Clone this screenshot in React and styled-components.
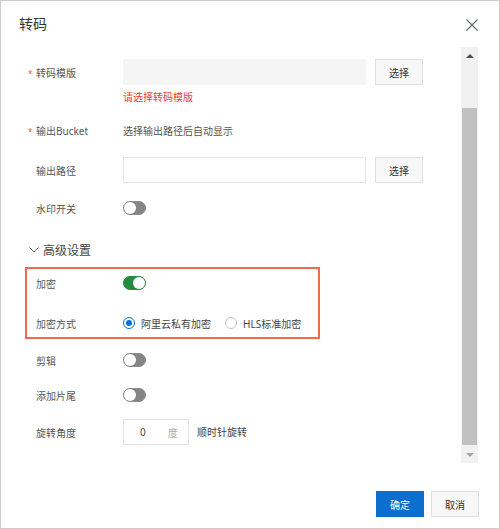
import React, { useState } from "react";
import styled, { createGlobalStyle } from "styled-components";

const GlobalStyle = createGlobalStyle`
  html, body {
    margin: 0;
    padding: 0;
    background: #fff;
  }
  body {
    font-family: "Noto Sans", "Noto Sans CJK SC", sans-serif;
    color: #444;
  }
  * {
    box-sizing: border-box;
  }
`;

const Frame = styled.div`
  width: 500px;
  height: 529px;
  border: 1px solid #cdcdcd;
  background: #fff;
  display: flex;
  flex-direction: column;
`;

const Header = styled.div`
  height: 46px;
  display: flex;
  align-items: center;
  justify-content: space-between;
  padding: 0 20px 0 18px;
`;

const Title = styled.div`
  font-size: 14px;
  color: #333;
  font-family: "Noto Sans CJK SC", sans-serif;
  margin-top: -2px;
`;

const CloseButton = styled.button`
  width: 14px;
  height: 14px;
  padding: 0;
  border: 0;
  background: none;
  display: flex;
  align-items: center;
  justify-content: center;
  cursor: pointer;
  margin-top: 2px;
`;

const Main = styled.div`
  height: 416px;
  display: flex;
  padding-right: 21px;
`;

const Content = styled.div`
  flex: 1;
  padding: 12px 0 0 24px;
  display: flex;
  flex-direction: column;
`;

const Row = styled.div`
  display: flex;
  align-items: center;
  height: 26px;
  padding-left: 3px;
  margin-top: ${(p) => p.$gap || 0}px;
`;

const Star = styled.span`
  width: 8px;
  flex-shrink: 0;
  color: #e8553f;
  font-size: 8px;
  line-height: 1;
  padding-top: 4px;
`;

const Label = styled.div`
  width: 87px;
  flex-shrink: 0;
  font-size: 10px;
  color: #555;
`;

const Value = styled.div`
  font-size: 10px;
  color: #555;
`;

const Input = styled.div`
  width: 243px;
  height: 26px;
  background: ${(p) => (p.$disabled ? "#f5f5f5" : "#fff")};
  border: 1px solid ${(p) => (p.$disabled ? "#f5f5f5" : "#e4e4e4")};
`;

const Button = styled.button`
  width: 48px;
  height: 26px;
  margin-left: ${(p) => p.$offset || 0}px;
  border: 1px solid ${(p) => (p.$primary ? "#0a6fce" : "#e0e0e0")};
  background: ${(p) => (p.$primary ? "#0a6fce" : "#f8f8f8")};
  color: ${(p) => (p.$primary ? "#fff" : "#333")};
  font-family: "Noto Sans CJK SC", sans-serif;
  font-size: 10px;
  padding: 0;
  cursor: pointer;
`;

const ErrorText = styled.div`
  margin: 5px 0 0 98px;
  height: 14px;
  line-height: 14px;
  font-size: 10px;
  color: #e8412f;
`;

const Track = styled.span`
  width: 23px;
  height: 14px;
  border-radius: 7px;
  border: 1px solid ${(p) => (p.$on ? "#248a3d" : "#8a8a8a")};
  background: ${(p) => (p.$on ? "#248a3d" : "#858585")};
  display: flex;
  align-items: center;
  justify-content: ${(p) => (p.$on ? "flex-end" : "flex-start")};
  cursor: pointer;
`;

const Knob = styled.span`
  width: 12px;
  height: 12px;
  border-radius: 50%;
  background: #fff;
`;

const Advanced = styled.div`
  display: flex;
  align-items: center;
  height: 26px;
  margin-top: 16px;
  padding-left: 4px;
  font-size: 12px;
  color: #444;
  gap: 4px;
`;

const HighlightBox = styled.div`
  width: 295px;
  margin-top: 4px;
  border: 2px solid #f26a4b;
  padding: 1px 0 0;
  height: 72px;

  ${Row} {
    padding-left: 1px;
  }
`;

const RadioGroup = styled.div`
  display: flex;
  align-items: center;
  gap: 14px;
`;

const RadioItem = styled.label`
  display: flex;
  align-items: center;
  gap: 6px;
  font-size: 10px;
  color: #444;
  cursor: pointer;
`;

const RadioCircle = styled.span`
  width: 12px;
  height: 12px;
  border-radius: 50%;
  border: 1px solid ${(p) => (p.$checked ? "#0a6fce" : "#c4c4c4")};
  background: #fff;
  display: flex;
  align-items: center;
  justify-content: center;

  &::after {
    content: "";
    width: 6px;
    height: 6px;
    border-radius: 50%;
    background: ${(p) => (p.$checked ? "#0a6fce" : "transparent")};
  }
`;

const AngleInput = styled.div`
  width: 66px;
  height: 26px;
  border: 1px solid #e4e4e4;
  display: flex;
  align-items: center;
  padding-left: 16px;
  font-size: 10px;
  color: #444;
`;

const Unit = styled.span`
  margin-left: 22px;
  color: #aaa;
`;

const Hint = styled.span`
  margin-left: 8px;
  font-size: 10px;
  color: #444;
  margin-top: -2px;
`;

const Scrollbar = styled.div`
  width: 17px;
  height: 416px;
  background: #f1f1f1;
  display: flex;
  flex-direction: column;
  align-items: center;
`;

const Arrow = styled.div`
  height: 17px;
  width: 17px;
  display: flex;
  align-items: center;
  justify-content: center;

  &::after {
    content: "";
    border-left: 4px solid transparent;
    border-right: 4px solid transparent;
    ${(p) =>
      p.$down
        ? "border-top: 4px solid #a3a3a3;"
        : "border-bottom: 4px solid #505050;"}
  }
`;

const Thumb = styled.div`
  width: 15px;
  height: 337px;
  margin-top: 44px;
  background: #c1c1c1;
`;

const Spacer = styled.div`
  flex: 1;
`;

const Footer = styled.div`
  display: flex;
  justify-content: flex-end;
  padding: 28px 20px 0 0;
  gap: 7px;
`;

const Switch = ({ on, onClick }) => (
  <Track $on={on} onClick={onClick}>
    <Knob />
  </Track>
);

const Chevron = () => (
  <svg width="10" height="6" viewBox="0 0 10 6">
    <path d="M0.5 0.5 L5 5 L9.5 0.5" fill="none" stroke="#666" strokeWidth="1" />
  </svg>
);

export default function App() {
  const [sw, setSw] = useState({ watermark: false, encrypt: true, clip: false, tail: false });
  const [mode, setMode] = useState("aliyun");
  const toggle = (k) => setSw((s) => ({ ...s, [k]: !s[k] }));

  return (
    <>
      <GlobalStyle />
      <Frame>
        <Header>
          <Title>转码</Title>
          <CloseButton aria-label="关闭">
            <svg width="12" height="12" viewBox="0 0 12 12">
              <path d="M0.5 0.5 L11.5 11.5 M11.5 0.5 L0.5 11.5" stroke="#6a6f78" strokeWidth="1.3" />
            </svg>
          </CloseButton>
        </Header>

        <Main>
          <Content>
            <Row>
              <Star>*</Star>
              <Label>转码模版</Label>
              <Input $disabled />
              <Button $offset={9}>选择</Button>
            </Row>
            <ErrorText>请选择转码模版</ErrorText>

            <Row $gap={13}>
              <Star>*</Star>
              <Label>输出Bucket</Label>
              <Value>选择输出路径后自动显示</Value>
            </Row>

            <Row $gap={14}>
              <Star />
              <Label>输出路径</Label>
              <Input />
              <Button $offset={9}>选择</Button>
            </Row>

            <Row $gap={12}>
              <Star />
              <Label>水印开关</Label>
              <Switch on={sw.watermark} onClick={() => toggle("watermark")} />
            </Row>

            <Advanced>
              <Chevron />
              高级设置
            </Advanced>

            <HighlightBox>
              <Row>
                <Star />
                <Label>加密</Label>
                <Switch on={sw.encrypt} onClick={() => toggle("encrypt")} />
              </Row>
              <Row $gap={14}>
                <Star />
                <Label>加密方式</Label>
                <RadioGroup>
                  <RadioItem onClick={() => setMode("aliyun")}>
                    <RadioCircle $checked={mode === "aliyun"} />
                    阿里云私有加密
                  </RadioItem>
                  <RadioItem onClick={() => setMode("hls")}>
                    <RadioCircle $checked={mode === "hls"} />
                    HLS标准加密
                  </RadioItem>
                </RadioGroup>
              </Row>
            </HighlightBox>

            <Row $gap={8}>
              <Star />
              <Label>剪辑</Label>
              <Switch on={sw.clip} onClick={() => toggle("clip")} />
            </Row>

            <Row $gap={9}>
              <Star />
              <Label>添加片尾</Label>
              <Switch on={sw.tail} onClick={() => toggle("tail")} />
            </Row>

            <Row $gap={11}>
              <Star />
              <Label>旋转角度</Label>
              <AngleInput>
                0<Unit>度</Unit>
              </AngleInput>
              <Hint>顺时针旋转</Hint>
            </Row>
          </Content>

          <Scrollbar>
            <Arrow />
            <Thumb />
            <Spacer />
            <Arrow $down />
          </Scrollbar>
        </Main>

        <Footer>
          <Button $primary>确定</Button>
          <Button>取消</Button>
        </Footer>
      </Frame>
    </>
  );
}
